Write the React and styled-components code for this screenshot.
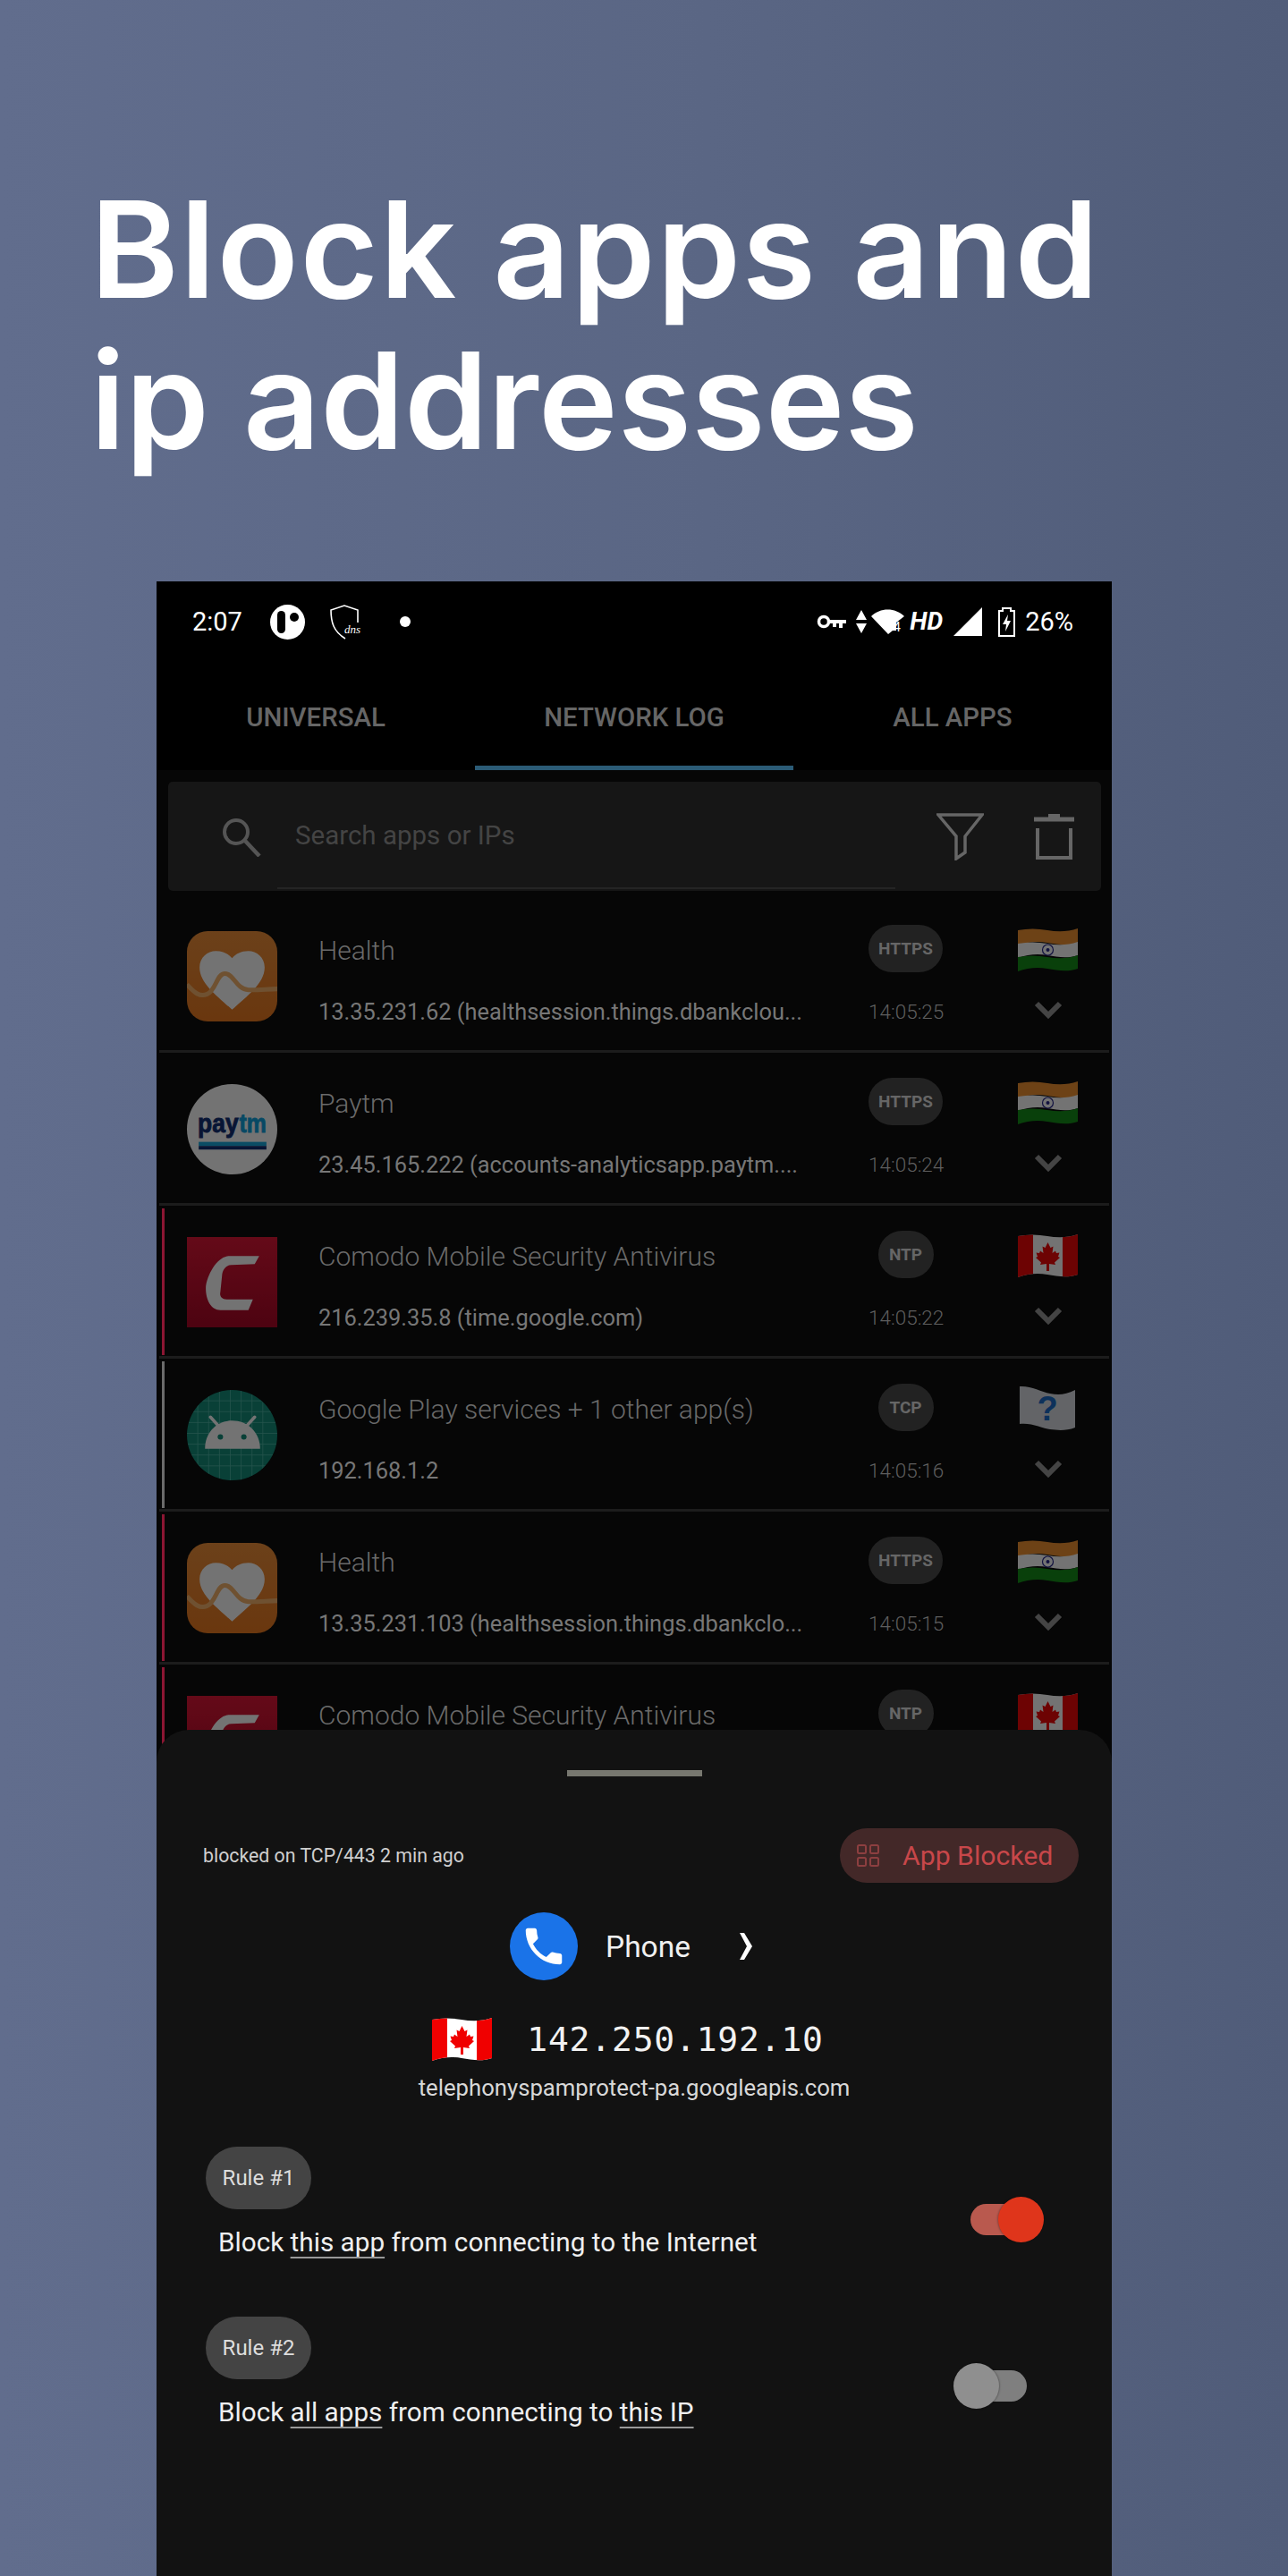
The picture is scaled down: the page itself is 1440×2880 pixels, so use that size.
import React, { useId } from "react";
import styled, { createGlobalStyle } from "styled-components";

const Global = createGlobalStyle`
  html, body { margin: 0; padding: 0; background: #5a6684; }
  * { box-sizing: border-box; }
  #root { width: 1440px; }
`;

const Page = styled.main`
  width: 1440px;
  height: 2880px;
  overflow: hidden;
  background: linear-gradient(90deg, #616d8d 0%, #5a6684 55%, #505c79 100%);
  font-family: Roboto, "Liberation Sans", sans-serif;
`;

const Headline = styled.h1`
  margin: 0;
  padding: 194px 0 0 101px;
  height: 650px;
  font-family: Inter, "Liberation Sans", sans-serif;
  font-weight: 600;
  font-size: 150px;
  line-height: 169px;
  color: #fff;
`;

const HeadlineLine = styled.span`
  display: block;
  letter-spacing: ${(p) => p.$spacing}px;
`;

const Phone = styled.section`
  position: relative;
  width: 1068px;
  height: 2230px;
  margin-left: 175px;
  overflow: hidden;
  background: #060606;
`;

const StatusBar = styled.header`
  height: 90px;
  background: #000;
  display: flex;
  align-items: center;
  justify-content: space-between;
  padding: 0 43px 0 40px;
  color: #fff;
  font-size: 29px;
`;

const StatusGroup = styled.div`
  display: flex;
  align-items: center;
`;

const StatusText = styled.span`
  line-height: 30px;
  margin-right: ${(p) => p.$after || 0}px;
`;

const HdMark = styled.span`
  font-style: italic;
  font-weight: 700;
  font-size: 28px;
  line-height: 30px;
  margin: 0 12px 0 6px;
`;

const Glyph = styled.svg`
  display: block;
  flex: none;
  margin-right: ${(p) => p.$after || 0}px;
`;

const Tabs = styled.nav`
  height: 121px;
  background: #000;
  display: grid;
  grid-template-columns: repeat(3, 1fr);
`;

const Tab = styled.div`
  display: flex;
  align-items: center;
  justify-content: center;
  padding-top: 8px;
  font-size: 29.4px;
  font-weight: 500;
  color: #666;
  border-bottom: 5px solid ${(p) => (p.$active ? "#2b5b76" : "transparent")};
`;

const SearchCard = styled.div`
  position: relative;
  height: 122px;
  margin: 13px 12px 10px 13px;
  padding: 0 29px 0 59px;
  display: flex;
  align-items: center;
  background: #161616;
  border-radius: 5px;
`;

const SearchLine = styled.div`
  position: absolute;
  left: 122px;
  right: 230px;
  bottom: 2px;
  height: 2px;
  background: #242424;
`;

const Placeholder = styled.span`
  flex: 1;
  margin: 0 0 2px 38px;
  font-size: 29.5px;
  color: #444;
`;

const TrashGlyph = styled.svg`
  display: block;
  flex: none;
  margin-left: 55px;
`;

const RowList = styled.div`
  margin: 0 3px;
`;

const Row = styled.article`
  position: relative;
  height: 171px;
  padding: 21px 0 0 31px;
  display: grid;
  grid-template-columns: 101px 661px 83px 151px;
  grid-template-rows: 68px 68px;
  align-items: center;
  border-bottom: 3px solid #1c1c1c;
  &::before {
    content: "";
    display: ${(p) => (p.$mark ? "block" : "none")};
    position: absolute;
    left: 3px;
    top: 3px;
    bottom: 1px;
    width: 3px;
    background: ${(p) => p.$mark};
  }
`;

const AppIcon = styled.div`
  grid-row: 1 / 3;
  align-self: start;
  margin-top: 14px;
  width: 101px;
  height: 101px;
  opacity: 0.44;
`;

const RowTitle = styled.div`
  padding: 3px 0 0 46px;
  font-size: 30px;
  font-weight: 300;
  color: #6a6a6a;
  white-space: nowrap;
`;

const RowSub = styled.div`
  grid-column: 2;
  padding: 4px 0 0 46px;
  font-size: 25.4px;
  color: #777;
  white-space: nowrap;
`;

const Proto = styled.div`
  justify-self: center;
  height: 53px;
  min-width: 62px;
  margin-top: -2px;
  padding: 0 11px;
  display: flex;
  align-items: center;
  justify-content: center;
  border-radius: 27px;
  background: #222;
  color: #666;
  font-size: 19px;
  font-weight: 700;
`;

const Time = styled.div`
  padding-top: 4px;
  text-align: center;
  font-size: 22.5px;
  font-weight: 300;
  color: #5e5e5e;
  white-space: nowrap;
`;

const FlagSlot = styled.div`
  justify-self: end;
  margin-top: 6px;
  opacity: 0.44;
`;

const ChevronSlot = styled.div`
  justify-self: end;
  width: 67px;
  display: flex;
  justify-content: center;
`;

const Sheet = styled.aside`
  position: absolute;
  left: 0;
  right: 0;
  top: 1284px;
  bottom: 0;
  background: #121212;
  border-radius: 36px 36px 0 0;
  padding-top: 45px;
  color: #fff;
`;

const Handle = styled.div`
  width: 151px;
  height: 7px;
  margin: 0 auto 58px;
  background: #77776f;
`;

const SheetTop = styled.div`
  display: flex;
  align-items: center;
  justify-content: space-between;
  padding: 0 37px 0 52px;
`;

const BlockedOn = styled.span`
  font-size: 21.3px;
  color: #cfcfcf;
`;

const Pill = styled.div`
  width: 267px;
  height: 61px;
  padding-left: 19px;
  display: flex;
  align-items: center;
  gap: 26px;
  border-radius: 31px;
  background: #432828;
  color: #c8474a;
  font-size: 30.2px;
`;

const AppLine = styled.div`
  margin-top: 33px;
  display: flex;
  align-items: center;
  justify-content: center;
  height: 76px;
  padding-right: 6px;
`;

const PhoneBadge = styled.div`
  width: 76px;
  height: 76px;
  border-radius: 50%;
  background: #1a73e8;
  display: flex;
  align-items: center;
  justify-content: center;
`;

const AppName = styled.span`
  margin: 0 54px 0 31px;
  font-size: 33.5px;
  color: #f0f0f0;
`;

const IpLine = styled.div`
  margin-top: 42px;
  display: flex;
  align-items: center;
  justify-content: center;
  height: 48px;
  gap: 39px;
  padding-right: 14px;
`;

const IpText = styled.span`
  font-family: "DejaVu Sans Mono", "Liberation Mono", monospace;
  font-size: 38px;
  letter-spacing: 0.8px;
  color: #f2f2f2;
`;

const Domain = styled.div`
  margin-top: 15px;
  text-align: center;
  font-size: 25.7px;
  color: #d8d8d8;
`;

const Rule = styled.div`
  margin-top: ${(p) => p.$top}px;
  padding: 0 ${(p) => p.$right}px 0 55px;
  display: flex;
  justify-content: space-between;
  align-items: flex-start;
`;

const RuleChip = styled.div`
  width: 118px;
  height: 70px;
  border-radius: 35px;
  background: #444;
  color: #ddd;
  font-size: 24px;
  display: flex;
  align-items: center;
  justify-content: center;
`;

const RuleText = styled.p`
  margin: 17px 0 0 14px;
  font-size: 29.7px;
  line-height: 40px;
  color: #efefef;
  u { text-underline-offset: 6px; text-decoration-thickness: 2px; text-decoration-color: #999; }
`;

const Toggle = styled.div`
  position: relative;
  width: 82px;
  height: 51px;
  margin-top: ${(p) => p.$top}px;
`;

const Track = styled.div`
  position: absolute;
  top: 8px;
  ${(p) => (p.$on ? "left: 0;" : "right: 0;")}
  width: 65px;
  height: 35px;
  border-radius: 18px;
  background: ${(p) => (p.$on ? "#b9594e" : "#7f7f7f")};
`;

const Thumb = styled.div`
  position: absolute;
  top: 0;
  ${(p) => (p.$on ? "right: 0;" : "left: 0;")}
  width: 51px;
  height: 51px;
  border-radius: 50%;
  background: ${(p) => (p.$on ? "#df351b" : "#8f8f8f")};
  box-shadow: ${(p) => (p.$on ? "-1px 0 2px rgba(0,0,0,.25)" : "1px 0 2px rgba(0,0,0,.25)")};
`;

const band = (y, h) => {
  const b = y + h;
  return `M0 ${y + 2}C11 ${y} 22 ${y} 33 ${y + 2}S56 ${y + 4} 67 ${y}L67 ${b}C56 ${b + 4} 44 ${b + 2} 33 ${b}S11 ${b - 1} 0 ${b + 3}Z`;
};

const Flag = ({ kind }) => {
  const id = useId();
  if (kind === "in") {
    return (
      <svg width="67" height="48" viewBox="0 0 67 48">
        <path d={band(0, 16)} fill="#f08f2c" />
        <path d={band(15, 15)} fill="#fff" />
        <path d={band(30, 15)} fill="#0f8a12" />
        <circle cx="33.5" cy="24" r="6" fill="none" stroke="#23238a" strokeWidth="1.2" />
        <circle cx="33.5" cy="24" r="2" fill="#23238a" />
      </svg>
    );
  }
  if (kind === "ca") {
    return (
      <svg width="67" height="48" viewBox="0 0 67 48">
        <clipPath id={id}>
          <path d={band(0, 45)} />
        </clipPath>
        <g clipPath={`url(#${id})`}>
          <rect width="67" height="50" fill="#fff" />
          <rect width="17" height="50" fill="#f00000" />
          <rect x="50" width="17" height="50" fill="#f00000" />
          <polygon
            points="33.5,9 36.5,15 39.5,13.5 38.5,21 42,18.5 43,21 46.5,20.5 45,25 47,26 41,31.5 42,34 35,33 35,41 32,41 32,33 25,34 26,31.5 20,26 22,25 20.5,20.5 24,21 25,18.5 28.5,21 27.5,13.5 30.5,15"
            fill="#f00000"
          />
        </g>
      </svg>
    );
  }
  return (
    <svg width="67" height="53" viewBox="0 0 67 53">
      <path d="M2 1C14 0 26 7 36 9S54 10 64 5L64 47C54 51 44 50 36 49S14 41 2 43Z" fill="#d9dde2" />
      <text x="33" y="39" textAnchor="middle" fontFamily="Liberation Sans" fontWeight="700" fontSize="38" fill="#1668c8">?</text>
    </svg>
  );
};

const HealthArt = () => {
  const id = useId();
  return (
    <svg width="101" height="101" viewBox="0 0 100 100">
      <defs>
        <linearGradient id={id} x1="0" y1="0" x2="0" y2="1">
          <stop offset="0" stopColor="#ee8c34" />
          <stop offset="1" stopColor="#e9761a" />
        </linearGradient>
      </defs>
      <rect width="100" height="100" rx="23" fill={`url(#${id})`} />
      <path d="M50 87C34 72 14 58 14 40C14 29 23 22 32 22C40 22 46 25 50 30C54 25 60 22 68 22C77 22 86 29 86 40C86 58 66 72 50 87Z" fill="#fff" />
      <path d="M0 59C8 68 14 73 22 70C32 66 33 47 42 47C52 47 54 64 68 65C78 65.5 90 64 100 64" fill="none" stroke="#f6b269" strokeWidth="5" />
    </svg>
  );
};

const PaytmArt = () => (
  <svg width="101" height="101" viewBox="0 0 100 100">
    <circle cx="50" cy="50" r="50" fill="#fff" />
    <text x="12" y="53" fontFamily="Liberation Sans" fontWeight="700" fontSize="29" textLength="45" lengthAdjust="spacingAndGlyphs" fill="#0b2a70" stroke="#0b2a70" strokeWidth="0.9">pay</text>
    <text x="58" y="53" fontFamily="Liberation Sans" fontWeight="700" fontSize="29" textLength="30" lengthAdjust="spacingAndGlyphs" fill="#0aa0dc" stroke="#0aa0dc" strokeWidth="0.9">tm</text>
    <rect x="13" y="64" width="75" height="4.5" fill="#12a5dd" />
    <rect x="13" y="68.5" width="75" height="4" fill="#0b2a70" />
  </svg>
);

const ComodoArt = () => {
  const id = useId();
  return (
    <svg width="101" height="101" viewBox="0 0 100 100">
      <defs>
        <linearGradient id={id} x1="0" y1="0" x2="0" y2="1">
          <stop offset="0" stopColor="#dd1030" />
          <stop offset="1" stopColor="#a80020" />
        </linearGradient>
      </defs>
      <rect width="100" height="100" fill={`url(#${id})`} />
      <path d="M80 21L47 21C35 21 24 38 21 54C20 68 26 81 37 81L68 81L73 69L44 69C38 69 36 65 37 61L39 41C40 35 44 31 49 31L75 30Z" fill="#fff" />
    </svg>
  );
};

const AndroidArt = () => {
  const id = useId();
  const lines = [12, 24, 36, 48, 60, 72, 84];
  return (
    <svg width="101" height="101" viewBox="0 0 100 100">
      <clipPath id={id}>
        <circle cx="50" cy="50" r="50" />
      </clipPath>
      <g clipPath={`url(#${id})`}>
        <rect width="100" height="100" fill="#0d8a76" />
        {lines.map((l) => (
          <g key={l} stroke="#4db6a6" strokeWidth="0.8">
            <line x1={l} y1="0" x2={l} y2="100" />
            <line x1="0" y1={l} x2="100" y2={l} />
          </g>
        ))}
      </g>
      <path d="M20 65C20 47 33 34 50 34S81 47 81 65Z" fill="#fff" />
      <path d="M26 30L36 41M75 30L65 41" stroke="#fff" strokeWidth="3.5" strokeLinecap="round" />
      <circle cx="37" cy="52" r="3" fill="#0d8a76" />
      <circle cx="63" cy="52" r="3" fill="#0d8a76" />
    </svg>
  );
};

const Chevron = () => (
  <svg width="32" height="21" viewBox="0 0 32 21">
    <path d="M3 3L16 16L29 3" fill="none" stroke="#444" strokeWidth="6" />
  </svg>
);

const art = { health: HealthArt, paytm: PaytmArt, comodo: ComodoArt, android: AndroidArt };

const rows = [
  { icon: "health", title: "Health", sub: "13.35.231.62 (healthsession.things.dbankclou...", proto: "HTTPS", time: "14:05:25", flag: "in" },
  { icon: "paytm", title: "Paytm", sub: "23.45.165.222 (accounts-analyticsapp.paytm....", proto: "HTTPS", time: "14:05:24", flag: "in" },
  { icon: "comodo", title: "Comodo Mobile Security Antivirus", sub: "216.239.35.8 (time.google.com)", proto: "NTP", time: "14:05:22", flag: "ca", mark: "#8c1633" },
  { icon: "android", title: "Google Play services + 1 other app(s)", sub: "192.168.1.2", proto: "TCP", time: "14:05:16", flag: "q", mark: "#6b6b6b" },
  { icon: "health", title: "Health", sub: "13.35.231.103 (healthsession.things.dbankclo...", proto: "HTTPS", time: "14:05:15", flag: "in", mark: "#8c1633" },
  { icon: "comodo", title: "Comodo Mobile Security Antivirus", sub: "216.239.35.8 (time.google.com)", proto: "NTP", time: "14:05:14", flag: "ca", mark: "#8c1633" },
];

export default function App() {
  return (
    <Page>
      <Global />
      <Headline>
        <HeadlineLine $spacing={1.7}>Block apps and</HeadlineLine>
        <HeadlineLine $spacing={0.1}>ip addresses</HeadlineLine>
      </Headline>
      <Phone>
        <StatusBar>
          <StatusGroup>
            <StatusText $after={31}>2:07</StatusText>
            <Glyph $after={28} width="39" height="39" viewBox="0 0 39 39">
              <circle cx="19.5" cy="19.5" r="19.5" fill="#fff" />
              <rect x="8" y="7" width="9" height="25" rx="4.5" fill="#000" />
              <circle cx="27" cy="14" r="5" fill="#000" />
            </Glyph>
            <Glyph $after={42} width="36" height="39" viewBox="0 0 36 39">
              <path d="M31 20V6L16 1L1 6C1 20 4 30 17 38" fill="none" stroke="#fff" strokeWidth="1.6" />
              <text x="16" y="32" fontFamily="Liberation Serif" fontStyle="italic" fontSize="13" fill="#fff">dns</text>
            </Glyph>
            <Glyph width="12" height="12" viewBox="0 0 12 12">
              <circle cx="6" cy="6" r="6" fill="#fff" />
            </Glyph>
          </StatusGroup>
          <StatusGroup>
            <Glyph $after={10} width="33" height="16" viewBox="0 0 33 16">
              <circle cx="8" cy="8" r="5.5" fill="none" stroke="#fff" strokeWidth="3.5" />
              <path d="M14 6H33V10H29V15H25V10H22V14H18V10H14Z" fill="#fff" />
            </Glyph>
            <Glyph $after={4} width="14" height="26" viewBox="0 0 14 26">
              <path d="M7 0L13 11H1ZM7 26L1 15H13Z" fill="#fff" />
            </Glyph>
            <Glyph width="37" height="28" viewBox="0 0 37 28">
              <path d="M0 8C10 -2 27 -2 37 8L28 15V24H24L19 28Z" fill="#fff" />
              <text x="25" y="25" fontFamily="Roboto" fontSize="14" fill="#fff">4</text>
            </Glyph>
            <HdMark>HD</HdMark>
            <Glyph $after={18} width="32" height="32" viewBox="0 0 32 32">
              <path d="M32 0V32H0Z" fill="#fff" />
            </Glyph>
            <Glyph $after={11} width="19" height="33" viewBox="0 0 19 33">
              <path d="M5 1H14V4H18V32H1V4H5Z" fill="none" stroke="#fff" strokeWidth="2" />
              <path d="M11 8L5 19H9L8 27L14 15H10Z" fill="#fff" />
            </Glyph>
            <StatusText>26%</StatusText>
          </StatusGroup>
        </StatusBar>
        <Tabs>
          <Tab>UNIVERSAL</Tab>
          <Tab $active>NETWORK LOG</Tab>
          <Tab>ALL APPS</Tab>
        </Tabs>
        <SearchCard>
          <svg width="45" height="45" viewBox="0 0 45 45">
            <circle cx="17" cy="17" r="13" fill="none" stroke="#555" strokeWidth="4" />
            <path d="M27 27L43 44" stroke="#555" strokeWidth="4.5" />
          </svg>
          <Placeholder>Search apps or IPs</Placeholder>
          <svg width="53" height="53" viewBox="0 0 53 53">
            <path d="M2 2H51L32 26V44L22 51V26Z" fill="none" stroke="#666" strokeWidth="3.5" />
          </svg>
          <TrashGlyph width="47" height="53" viewBox="0 0 47 53">
            <path d="M1 7H46" stroke="#666" strokeWidth="5" />
            <path d="M17 3H30" stroke="#666" strokeWidth="4" />
            <path d="M5 17V50H42V17" fill="none" stroke="#666" strokeWidth="4" />
          </TrashGlyph>
          <SearchLine />
        </SearchCard>
        <RowList>
          {rows.map((r, i) => {
            const Art = art[r.icon];
            return (
              <Row key={i} $mark={r.mark}>
                <AppIcon>
                  <Art />
                </AppIcon>
                <RowTitle>{r.title}</RowTitle>
                <Proto>{r.proto}</Proto>
                <FlagSlot>
                  <Flag kind={r.flag} />
                </FlagSlot>
                <RowSub>{r.sub}</RowSub>
                <Time>{r.time}</Time>
                <ChevronSlot>
                  <Chevron />
                </ChevronSlot>
              </Row>
            );
          })}
        </RowList>
        <Sheet>
          <Handle />
          <SheetTop>
            <BlockedOn>blocked on TCP/443 2 min ago</BlockedOn>
            <Pill>
              <svg width="25" height="25" viewBox="0 0 25 25">
                <g fill="none" stroke="#8c3f40" strokeWidth="2">
                  <rect x="1" y="1" width="9" height="9" rx="1.5" />
                  <rect x="15" y="1" width="9" height="9" rx="1.5" />
                  <rect x="1" y="15" width="9" height="9" rx="1.5" />
                  <rect x="15" y="15" width="9" height="9" rx="1.5" />
                </g>
              </svg>
              App Blocked
            </Pill>
          </SheetTop>
          <AppLine>
            <PhoneBadge>
              <svg width="54" height="54" viewBox="0 0 24 24">
                <path
                  d="M6.62 10.79c1.44 2.83 3.76 5.14 6.59 6.59l2.2-2.2c.27-.27.67-.36 1.02-.24 1.12.37 2.33.57 3.57.57.55 0 1 .45 1 1V20c0 .55-.45 1-1 1-9.39 0-17-7.61-17-17 0-.55.45-1 1-1h3.5c.55 0 1 .45 1 1 0 1.25.2 2.45.57 3.57.11.35.03.74-.25 1.02l-2.2 2.2z"
                  fill="#fff"
                />
              </svg>
            </PhoneBadge>
            <AppName>Phone</AppName>
            <svg width="16" height="30" viewBox="0 0 16 30">
              <path d="M1 0H6L15 15L6 30H1L9 15Z" fill="#fff" />
            </svg>
          </AppLine>
          <IpLine>
            <Flag kind="ca" />
            <IpText>142.250.192.10</IpText>
          </IpLine>
          <Domain>telephonyspamprotect-pa.googleapis.com</Domain>
          <Rule $top={51} $right={76}>
            <div>
              <RuleChip>Rule #1</RuleChip>
              <RuleText>
                Block <u>this app</u> from connecting to the Internet
              </RuleText>
            </div>
            <Toggle $top={56}>
              <Track $on />
              <Thumb $on />
            </Toggle>
          </Rule>
          <Rule $top={63} $right={95}>
            <div>
              <RuleChip>Rule #2</RuleChip>
              <RuleText>
                Block <u>all apps</u> from connecting to <u>this IP</u>
              </RuleText>
            </div>
            <Toggle $top={52}>
              <Track />
              <Thumb />
            </Toggle>
          </Rule>
        </Sheet>
      </Phone>
    </Page>
  );
}
